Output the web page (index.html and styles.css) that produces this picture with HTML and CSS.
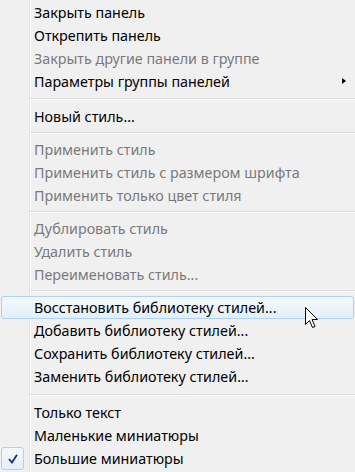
FILE: index.html
```html
<!DOCTYPE html>
<html lang="ru">
<head>
  <meta charset="UTF-8">
  <title>Меню стилей</title>
  <link rel="stylesheet" href="styles.css">
</head>
<body>
  <div class="menu">
    <div class="item">Закрыть панель</div>
    <div class="item">Открепить панель</div>
    <div class="item disabled">Закрыть другие панели в группе</div>
    <div class="item has-sub">Параметры группы панелей<span class="arrow"></span></div>
    <div class="sep first"></div>

    <div class="item">Новый стиль...</div>
    <div class="sep"></div>

    <div class="item disabled">Применить стиль</div>
    <div class="item disabled">Применить стиль с размером шрифта</div>
    <div class="item disabled">Применить только цвет стиля</div>
    <div class="sep"></div>

    <div class="item disabled">Дублировать стиль</div>
    <div class="item disabled">Удалить стиль</div>
    <div class="item disabled">Переименовать стиль...</div>
    <div class="sep"></div>

    <div class="item hover">Восстановить библиотеку стилей...
      <!-- указатель мыши -->
      <svg class="cursor" width="14" height="23" viewBox="0 0 14 23">
        <path d="M0.5 0.5 L0.5 17.5 L4.5 13.5 L7.5 20.5 L10 19.5 L7 12.5 L12.5 12.5 Z" fill="#fff" stroke="#000" stroke-width="1" stroke-linejoin="round"/>
      </svg>
    </div>
    <div class="item">Добавить библиотеку стилей...</div>
    <div class="item">Сохранить библиотеку стилей...</div>
    <div class="item">Заменить библиотеку стилей...</div>
    <div class="sep last"></div>

    <div class="item">Только текст</div>
    <div class="item">Маленькие миниатюры</div>
    <div class="item checked">
      <span class="check">
        <svg width="10" height="10" viewBox="0 0 10 10">
          <path d="M1 5 L4 8.5 L9 0.8" fill="none" stroke="#1a2a8c" stroke-width="1.8"/>
        </svg>
      </span>
      Большие миниатюры
    </div>
  </div>
</body>
</html>
```

FILE: styles.css
```css
/* Контекстное меню в стиле Windows 7 */
* {
  margin: 0;
  padding: 0;
  box-sizing: border-box;
}

body {
  background-color: #f0f0f0;
  font-family: "Noto Sans", "Open Sans", sans-serif;
  font-size: 14.3px;
  color: #000;
}

.menu {
  position: relative;
  width: 355px;
  height: 472px;
  padding-top: 1px;
  overflow: hidden;
  background: linear-gradient(to right, #f0f0f0 29px, #e2e3e3 29px, #e2e3e3 30px, #ffffff 30px, #ffffff 31px, #f0f0f0 31px);
}

.item {
  position: relative;
  display: flex;
  align-items: center;
  height: 23px;
  padding-left: 34px;
  white-space: nowrap;
}

.item.disabled {
  color: #7a7a7a;
}

.arrow {
  position: absolute;
  right: 9px;
  top: 8px;
  width: 0;
  height: 0;
  border-top: 3.5px solid transparent;
  border-bottom: 3.5px solid transparent;
  border-left: 4px solid #000;
}

/* Разделитель */
.sep {
  height: 10px;
  padding-top: 4px;
  margin-left: 30px;
}

.sep.first {
  height: 12px;
  padding-top: 5px;
}

.sep.last {
  height: 13px;
  padding-top: 6px;
}

.sep::before {
  content: '';
  display: block;
  height: 1px;
  background-color: #dcdcdc;
  border-bottom: 1px solid #ffffff;
  box-sizing: content-box;
}

/* Подсвеченный пункт */
.item.hover::before {
  content: '';
  position: absolute;
  left: 1px;
  right: 1px;
  top: 0;
  bottom: 0;
  border: 1px solid #a9d4f5;
  border-radius: 3px;
  background: linear-gradient(to bottom, #f3f8fd, #e4eff9);
  z-index: -1;
}

.item.hover {
  z-index: 0;
}

.cursor {
  position: absolute;
  left: 305px;
  top: 11px;
}

/* Отмеченный пункт */
.check {
  position: absolute;
  left: 1px;
  top: 0;
  width: 23px;
  height: 23px;
  display: flex;
  align-items: center;
  justify-content: center;
  border: 1px solid #a9d4f5;
  border-radius: 3px;
  background: linear-gradient(to bottom, #f3f8fd, #e4eff9);
}
```
